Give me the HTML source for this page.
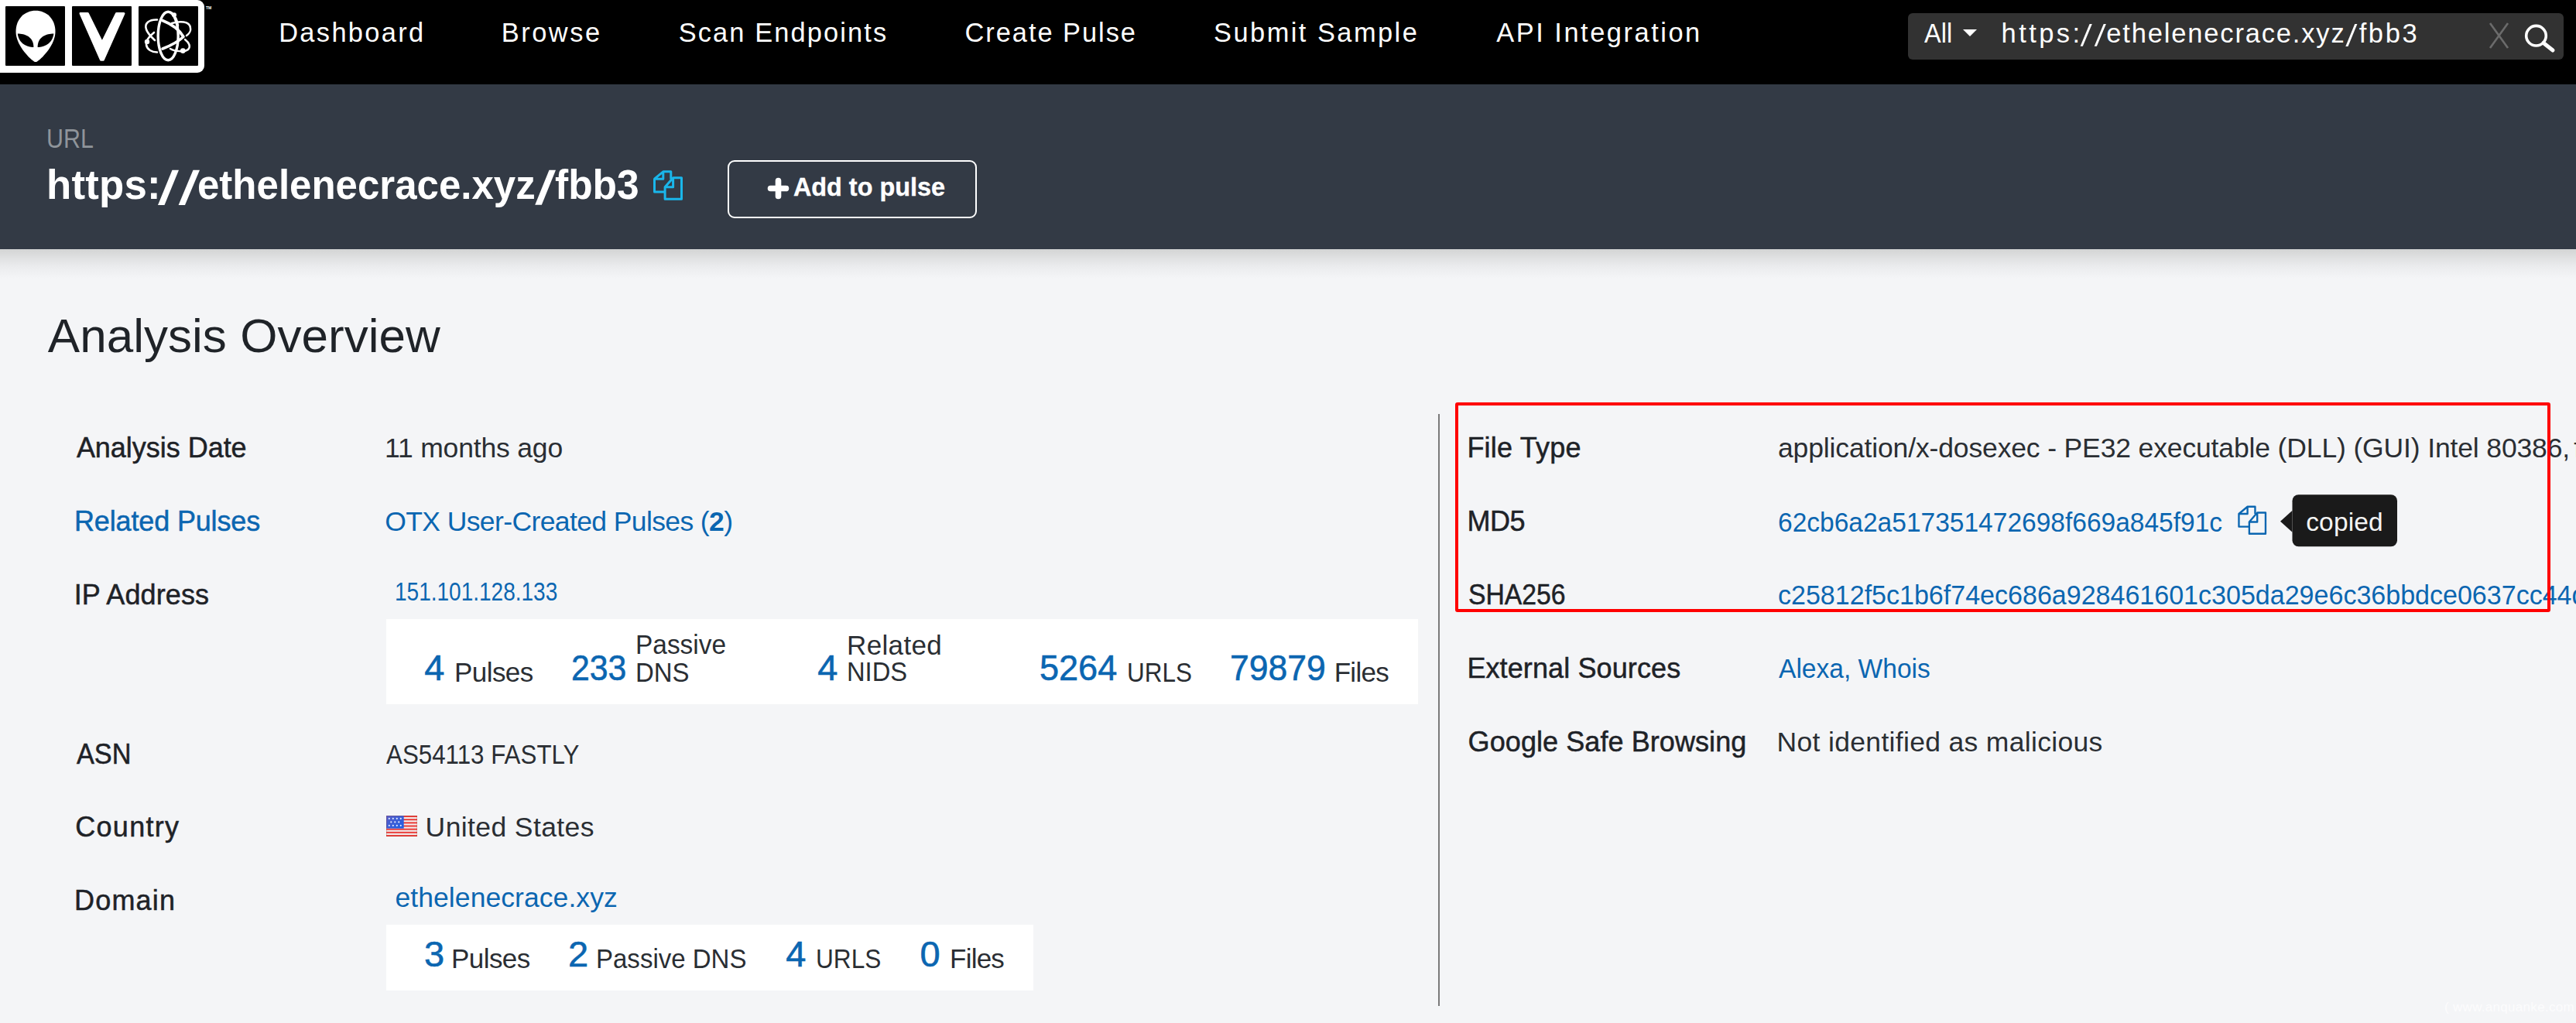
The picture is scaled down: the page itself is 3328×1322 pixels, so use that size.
<!DOCTYPE html>
<html><head><meta charset="utf-8">
<style>
html,body{margin:0;padding:0}
body{width:3328px;height:1322px;overflow:hidden;position:relative;background:#f4f5f7;font-family:"Liberation Sans",sans-serif}
body>div,body>svg{position:absolute}
body>div{white-space:nowrap;transform-origin:0 0}
.lab{-webkit-text-stroke:0.5px currentColor}
.num{-webkit-text-stroke:0.6px currentColor}
.bb{-webkit-text-stroke:0.4px currentColor}
</style></head><body>
<div style="left:0;top:0;width:3328px;height:109px;background:#000"></div>
<svg style="left:0;top:0" width="280" height="100" viewBox="0 0 280 100">
<rect x="-8" y="0" width="272" height="94" rx="9" fill="#fff"/>
<rect x="7" y="8" width="77" height="77" rx="1" fill="#000"/>
<rect x="93" y="8" width="77" height="77" rx="1" fill="#000"/>
<rect x="179" y="8" width="77" height="77" rx="1" fill="#000"/>
<path d="M46 13.7C32 13.7 20.5 24 20.5 41C20.5 57 36 74 44 79.5C45.2 80.3 46.8 80.3 48 79.5C56 74 71.5 57 71.5 41C71.5 24 60 13.7 46 13.7Z" fill="#fff"/>
<path d="M22.8 43.4C32 43.4 43.4 47 43.4 61C35 61 24 56 22.8 43.4Z" fill="#000"/>
<path d="M69.4 43.4C60 43.4 48.6 47 48.6 61C57 61 68 56 69.4 43.4Z" fill="#000"/>
<path d="M104 17.4H113.3L131.9 55.1L150.5 17.4H160L133.4 77.2H130.4Z" fill="#fff" stroke="#fff" stroke-width="3" stroke-linejoin="round"/>
<g fill="none" stroke="#fff" stroke-linecap="round">
<ellipse cx="217.2" cy="46.5" rx="13" ry="31.3" stroke-width="3.4"/>
<path d="M210 26.5Q229 34 237 47.5Q228 56 210 63" stroke-width="3.6" stroke-linejoin="round"/>
<path d="M203 25.5C193 25 186 30 189 38C191 44 196 48 200 52M199 42C194 46 188 52 189 58C190 64 196 67.5 203 67.5" stroke-width="2.6"/>
<path d="M222 30C232 27 245 27 246 36C247 40 244 44 241 46M239 51C244 55 247 60 243 64C238 68 225 66 220 63M221 16C226 20 229 26 230 33" stroke-width="2.5"/>
</g>
<g fill="#fff"><circle cx="225" cy="19.3" r="3"/><circle cx="190" cy="53.9" r="3.2"/><circle cx="236.3" cy="65.6" r="3.4"/></g>
<text x="266" y="11.5" font-size="5" font-weight="bold" fill="#fff" font-family="Liberation Sans">TM</text>
</svg>
<div style="left:2465px;top:17px;width:847px;height:60px;background:#323232;border-radius:6px"></div>
<svg style="left:2530px;top:30px" width="30" height="24" viewBox="0 0 30 24"><path d="M6 8H24L15 17Z" fill="#fff"/></svg>
<svg style="left:3205px;top:22px" width="110" height="50" viewBox="3205 22 110 50">
<path d="M3217 30L3240 62M3240 30L3217 62" stroke="#6b6b6b" stroke-width="2.6"/>
<circle cx="3276.5" cy="46.2" r="12.8" fill="none" stroke="#fff" stroke-width="3.6"/>
<path d="M3286 55.5L3298 65" stroke="#fff" stroke-width="5" stroke-linecap="round"/>
</svg>
<div style="left:0;top:109px;width:3328px;height:213px;background:#333a45"></div>
<svg style="left:0;top:0" width="3328" height="300" viewBox="0 0 3328 300"><g fill="#fff"><path d="M204 265H212.5L231 219.7H222.5Z"/><path d="M230.6 265H239L258 219.7H249.5Z"/><path d="M691.2 264.8H699.8L718 219.7H709.5Z"/><path d="M2687.6 59.8H2690.8L2702.8 31H2699.6Z"/><path d="M2705.7 59.8H2708.9L2720.9 31H2717.7Z"/><path d="M3030.3 59.9H3033.5L3045.4 30.9H3042.2Z"/></g></svg>
<div style="left:0;top:322px;width:3328px;height:38px;background:linear-gradient(#d3d4d4 0%,#e0e1e2 30%,#ebecee 60%,#f4f5f7 100%)"></div>
<svg style="left:843px;top:219px" width="42" height="42" viewBox="0 0 42 42" fill="none" stroke="#1ab6ea" stroke-width="3" stroke-linejoin="round">
<path d="M2.5 12.2L13.8 2.8H23.8V12.5M16.1 29H2.5V12.2H13.8V2.8"/>
<path d="M16.1 22.8L26.6 10.7H37.5V38.3H16.1Z M26.6 10.7V22.8H16.1"/>
</svg>
<div style="left:940px;top:207px;width:317.5px;height:70.5px;border:2.6px solid #fff;border-radius:9px"></div>
<svg style="left:990px;top:228px" width="32" height="32" viewBox="0 0 32 32"><path d="M15.5 5.5V25.5M5.5 15.5H25.5" stroke="#fff" stroke-width="7.6" stroke-linecap="round"/></svg>
<div style="left:499px;top:800px;width:1333px;height:110px;background:#fff"></div>
<div style="left:499px;top:1195px;width:836px;height:85px;background:#fff"></div>
<div style="left:1858px;top:535px;width:2px;height:765px;background:#7a7a7a"></div>
<svg style="left:499px;top:1054px" width="40.2" height="27" viewBox="0 0 40.2 27">
<defs><linearGradient id="cg" x1="0" y1="0" x2="1" y2="1"><stop offset="0" stop-color="#5a5fc8"/><stop offset="1" stop-color="#1c5fe6"/></linearGradient></defs>
<rect x="0" y="0" width="40.2" height="27" fill="#f2f0f0"/>
<rect x="0" y="0.000" width="40.2" height="2.077" fill="#ea3f3c"/><rect x="0" y="4.154" width="40.2" height="2.077" fill="#ea3f3c"/><rect x="0" y="8.308" width="40.2" height="2.077" fill="#ea3f3c"/><rect x="0" y="12.462" width="40.2" height="2.077" fill="#ea3f3c"/><rect x="0" y="16.616" width="40.2" height="2.077" fill="#ea3f3c"/><rect x="0" y="20.770" width="40.2" height="2.077" fill="#ea3f3c"/><rect x="0" y="24.924" width="40.2" height="2.077" fill="#ea3f3c"/>
<rect x="0" y="0" width="22.7" height="16.6" fill="url(#cg)"/>
<g fill="#e6ecff"><circle cx="3.8" cy="3.8" r="1.1"/><circle cx="8.8" cy="3.8" r="1.1"/><circle cx="13.8" cy="3.8" r="1.1"/><circle cx="18.8" cy="3.8" r="1.1"/><circle cx="6.3" cy="8.3" r="1.1"/><circle cx="11.3" cy="8.3" r="1.1"/><circle cx="16.3" cy="8.3" r="1.1"/><circle cx="3.8" cy="12.8" r="1.1"/><circle cx="8.8" cy="12.8" r="1.1"/><circle cx="13.8" cy="12.8" r="1.1"/><circle cx="18.8" cy="12.8" r="1.1"/></g>
<rect x="0.4" y="0.4" width="39.4" height="26.2" fill="none" stroke="rgba(140,60,40,.35)" stroke-width="0.8"/>
</svg>
<svg style="left:2889.7px;top:652px" width="41.4" height="41.4" viewBox="0 0 42 42" fill="none" stroke="#0b66b1" stroke-width="2.4" stroke-linejoin="round">
<path d="M2.5 12.2L13.8 2.8H23.8V12.5M16.1 29H2.5V12.2H13.8V2.8"/>
<path d="M16.1 22.8L26.6 10.7H37.5V38.3H16.1Z M26.6 10.7V22.8H16.1"/>
</svg>
<svg style="left:2944px;top:638px" width="156" height="70" viewBox="0 0 156 70">
<path d="M2 35.8L17.5 21.8V49.8Z" fill="#1a1a1a"/>
<rect x="17.5" y="1.2" width="135.5" height="67.1" rx="8" fill="#1a1a1a"/>
</svg>
<div style="left:360.2px;top:24.9px;font-size:34.4px;line-height:34.4px;font-weight:normal;color:#fff;letter-spacing:2.35px">Dashboard</div>
<div style="left:647.7px;top:24.9px;font-size:34.4px;line-height:34.4px;font-weight:normal;color:#fff;letter-spacing:2.55px">Browse</div>
<div style="left:876.7px;top:24.9px;font-size:34.4px;line-height:34.4px;font-weight:normal;color:#fff;letter-spacing:2.12px">Scan Endpoints</div>
<div style="left:1246.5px;top:24.9px;font-size:34.4px;line-height:34.4px;font-weight:normal;color:#fff;letter-spacing:1.97px">Create Pulse</div>
<div style="left:1568.1px;top:24.9px;font-size:34.4px;line-height:34.4px;font-weight:normal;color:#fff;letter-spacing:2.46px">Submit Sample</div>
<div style="left:1933.2px;top:24.9px;font-size:34.4px;line-height:34.4px;font-weight:normal;color:#fff;letter-spacing:2.54px">API Integration</div>
<div style="left:2485.5px;top:25.0px;font-size:35.0px;line-height:35.0px;font-weight:normal;color:#fff;letter-spacing:0.00px;transform:scaleX(0.9291)">All</div>
<div style="left:2585.6px;top:26.2px;font-size:34.5px;line-height:34.5px;font-weight:normal;color:#fff;letter-spacing:3.43px">https:</div>
<div style="left:2721.3px;top:26.2px;font-size:34.5px;line-height:34.5px;font-weight:normal;color:#fff;letter-spacing:1.83px">ethelenecrace.xyz</div>
<div style="left:3047.7px;top:26.2px;font-size:34.5px;line-height:34.5px;font-weight:normal;color:#fff;letter-spacing:2.59px">fbb3</div>
<div style="left:59.9px;top:162.0px;font-size:34.4px;line-height:34.4px;font-weight:normal;color:#8f949a;letter-spacing:0.00px;transform:scaleX(0.8844)">URL</div>
<div style="left:60.1px;top:213.0px;font-size:52.8px;line-height:52.8px;font-weight:bold;color:#fff;letter-spacing:0.17px">https:</div>
<div style="left:254.7px;top:213.0px;font-size:52.8px;line-height:52.8px;font-weight:bold;color:#fff;letter-spacing:0.00px;transform:scaleX(0.9662)">ethelenecrace.xyz</div>
<div style="left:717.1px;top:213.0px;font-size:52.8px;line-height:52.8px;font-weight:bold;color:#fff;letter-spacing:0.00px;transform:scaleX(0.9748)">fbb3</div>
<div class="bb" style="left:1025.2px;top:224.1px;font-size:34.0px;line-height:34.0px;font-weight:bold;color:#fff;letter-spacing:0.00px;transform:scaleX(0.9514)">Add to pulse</div>
<div style="left:61.8px;top:403.3px;font-size:62.0px;line-height:62.0px;font-weight:normal;color:#1f2328;letter-spacing:0.03px">Analysis Overview</div>
<div class="lab" style="left:98.9px;top:560.7px;font-size:36.0px;line-height:36.0px;font-weight:normal;color:#1e2227;letter-spacing:-0.03px">Analysis Date</div>
<div class="lab" style="left:96.0px;top:655.9px;font-size:36.0px;line-height:36.0px;font-weight:normal;color:#0b66b1;letter-spacing:-0.15px">Related Pulses</div>
<div class="lab" style="left:95.7px;top:750.9px;font-size:36.0px;line-height:36.0px;font-weight:normal;color:#1e2227;letter-spacing:0.10px">IP Address</div>
<div class="lab" style="left:98.9px;top:956.6px;font-size:36.0px;line-height:36.0px;font-weight:normal;color:#1e2227;letter-spacing:0.00px;transform:scaleX(0.9520)">ASN</div>
<div class="lab" style="left:97.2px;top:1050.9px;font-size:36.0px;line-height:36.0px;font-weight:normal;color:#1e2227;letter-spacing:1.30px">Country</div>
<div class="lab" style="left:96.0px;top:1145.9px;font-size:36.0px;line-height:36.0px;font-weight:normal;color:#1e2227;letter-spacing:1.20px">Domain</div>
<div style="left:497.0px;top:561.9px;font-size:35.5px;line-height:35.5px;font-weight:normal;color:#2a2e33;letter-spacing:-0.17px">11 months ago</div>
<div style="left:497.3px;top:657.1px;font-size:35.5px;line-height:35.5px;font-weight:normal;color:#0b66b1;letter-spacing:-0.61px">OTX User-Created Pulses (<b>2</b>)</div>
<div style="left:509.9px;top:747.2px;font-size:34.0px;line-height:34.0px;font-weight:normal;color:#0b66b1;letter-spacing:0.00px;transform:scaleX(0.8238)">151.101.128.133</div>
<div style="left:498.9px;top:957.8px;font-size:35.5px;line-height:35.5px;font-weight:normal;color:#2a2e33;letter-spacing:0.00px;transform:scaleX(0.8820)">AS54113 FASTLY</div>
<div style="left:549.6px;top:1052.1px;font-size:35.5px;line-height:35.5px;font-weight:normal;color:#2a2e33;letter-spacing:0.40px">United States</div>
<div style="left:510.5px;top:1142.6px;font-size:35.5px;line-height:35.5px;font-weight:normal;color:#0b66b1;letter-spacing:0.07px">ethelenecrace.xyz</div>
<div class="num" style="left:548.3px;top:839.2px;font-size:47.0px;line-height:47.0px;font-weight:normal;color:#0b66b1;letter-spacing:0.00px">4</div>
<div class="num" style="left:738.3px;top:839.2px;font-size:47.0px;line-height:47.0px;font-weight:normal;color:#0b66b1;letter-spacing:0.00px;transform:scaleX(0.9105)">233</div>
<div class="num" style="left:1056.2px;top:839.2px;font-size:47.0px;line-height:47.0px;font-weight:normal;color:#0b66b1;letter-spacing:0.00px">4</div>
<div class="num" style="left:1342.7px;top:839.2px;font-size:47.0px;line-height:47.0px;font-weight:normal;color:#0b66b1;letter-spacing:0.00px;transform:scaleX(0.9587)">5264</div>
<div class="num" style="left:1588.7px;top:839.2px;font-size:47.0px;line-height:47.0px;font-weight:normal;color:#0b66b1;letter-spacing:0.00px;transform:scaleX(0.9477)">79879</div>
<div style="left:587.1px;top:850.8px;font-size:35.0px;line-height:35.0px;font-weight:normal;color:#2a2e33;letter-spacing:-0.59px">Pulses</div>
<div style="left:820.8px;top:815.2px;font-size:35.0px;line-height:35.0px;font-weight:normal;color:#2a2e33;letter-spacing:0.00px;transform:scaleX(0.9549)">Passive</div>
<div style="left:820.9px;top:850.8px;font-size:35.0px;line-height:35.0px;font-weight:normal;color:#2a2e33;letter-spacing:0.00px;transform:scaleX(0.9413)">DNS</div>
<div style="left:1094.1px;top:816.1px;font-size:35.0px;line-height:35.0px;font-weight:normal;color:#2a2e33;letter-spacing:0.33px">Related</div>
<div style="left:1094.3px;top:850.3px;font-size:35.0px;line-height:35.0px;font-weight:normal;color:#2a2e33;letter-spacing:0.00px;transform:scaleX(0.9345)">NIDS</div>
<div style="left:1455.5px;top:850.8px;font-size:35.0px;line-height:35.0px;font-weight:normal;color:#2a2e33;letter-spacing:0.00px;transform:scaleX(0.8981)">URLS</div>
<div style="left:1723.7px;top:850.8px;font-size:35.0px;line-height:35.0px;font-weight:normal;color:#2a2e33;letter-spacing:-0.71px">Files</div>
<div class="num" style="left:548.0px;top:1209.0px;font-size:47.0px;line-height:47.0px;font-weight:normal;color:#0b66b1;letter-spacing:0.00px">3</div>
<div class="num" style="left:734.1px;top:1209.0px;font-size:47.0px;line-height:47.0px;font-weight:normal;color:#0b66b1;letter-spacing:0.00px">2</div>
<div class="num" style="left:1015.3px;top:1209.0px;font-size:47.0px;line-height:47.0px;font-weight:normal;color:#0b66b1;letter-spacing:0.00px">4</div>
<div class="num" style="left:1188.6px;top:1209.0px;font-size:47.0px;line-height:47.0px;font-weight:normal;color:#0b66b1;letter-spacing:0.00px">0</div>
<div style="left:583.1px;top:1220.5px;font-size:35.0px;line-height:35.0px;font-weight:normal;color:#2a2e33;letter-spacing:-0.59px">Pulses</div>
<div style="left:770.0px;top:1220.5px;font-size:35.0px;line-height:35.0px;font-weight:normal;color:#2a2e33;letter-spacing:0.00px;transform:scaleX(0.9431)">Passive DNS</div>
<div style="left:1053.8px;top:1220.5px;font-size:35.0px;line-height:35.0px;font-weight:normal;color:#2a2e33;letter-spacing:0.00px;transform:scaleX(0.9037)">URLS</div>
<div style="left:1227.1px;top:1220.5px;font-size:35.0px;line-height:35.0px;font-weight:normal;color:#2a2e33;letter-spacing:-0.78px">Files</div>
<div class="lab" style="left:1895.4px;top:560.5px;font-size:36.0px;line-height:36.0px;font-weight:normal;color:#1e2227;letter-spacing:0.22px">File Type</div>
<div class="lab" style="left:1895.4px;top:656.4px;font-size:36.0px;line-height:36.0px;font-weight:normal;color:#1e2227;letter-spacing:-0.48px">MD5</div>
<div class="lab" style="left:1896.9px;top:750.9px;font-size:36.0px;line-height:36.0px;font-weight:normal;color:#1e2227;letter-spacing:0.00px;transform:scaleX(0.9369)">SHA256</div>
<div class="lab" style="left:1895.4px;top:845.9px;font-size:36.0px;line-height:36.0px;font-weight:normal;color:#1e2227;letter-spacing:0.11px">External Sources</div>
<div class="lab" style="left:1896.6px;top:940.9px;font-size:36.0px;line-height:36.0px;font-weight:normal;color:#1e2227;letter-spacing:0.08px">Google Safe Browsing</div>
<div style="left:2297.0px;top:561.7px;font-size:35.5px;line-height:35.5px;font-weight:normal;color:#2a2e33;letter-spacing:-0.14px">application/x-dosexec - PE32 executable (DLL) (GUI) Intel 80386,<span style="margin-left:-4.5px"> </span>for MS Windows</div>
<div style="left:2296.8px;top:657.6px;font-size:35.5px;line-height:35.5px;font-weight:normal;color:#0b66b1;letter-spacing:0.00px;transform:scaleX(0.9442)">62cb6a2a517351472698f669a845f91c</div>
<div style="left:2297.1px;top:752.1px;font-size:35.5px;line-height:35.5px;font-weight:normal;color:#0b66b1;letter-spacing:0.00px;transform:scaleX(0.9585)">c25812f5c1b6f74ec686a928461601c305da29e6c36bbdce0637cc44d0a9e1</div>
<div style="left:2298.4px;top:847.1px;font-size:35.5px;line-height:35.5px;font-weight:normal;color:#0b66b1;letter-spacing:0.00px;transform:scaleX(0.9450)">Alexa, Whois</div>
<div style="left:2295.6px;top:942.1px;font-size:35.5px;line-height:35.5px;font-weight:normal;color:#2a2e33;letter-spacing:0.32px">Not identified as malicious</div>
<div style="left:2979.2px;top:657.6px;font-size:33.5px;line-height:33.5px;font-weight:normal;color:#f4f4f4;letter-spacing:0.17px">copied</div>
<div style="left:1880px;top:520px;width:1407px;height:263px;border:4px solid #f00;border-radius:3px"></div>
<div style="left:3158px;top:1293px;font-size:17px;line-height:17px;color:#fcfcfd;letter-spacing:0.3px">( www.anquanke.com )</div>
</body></html>
